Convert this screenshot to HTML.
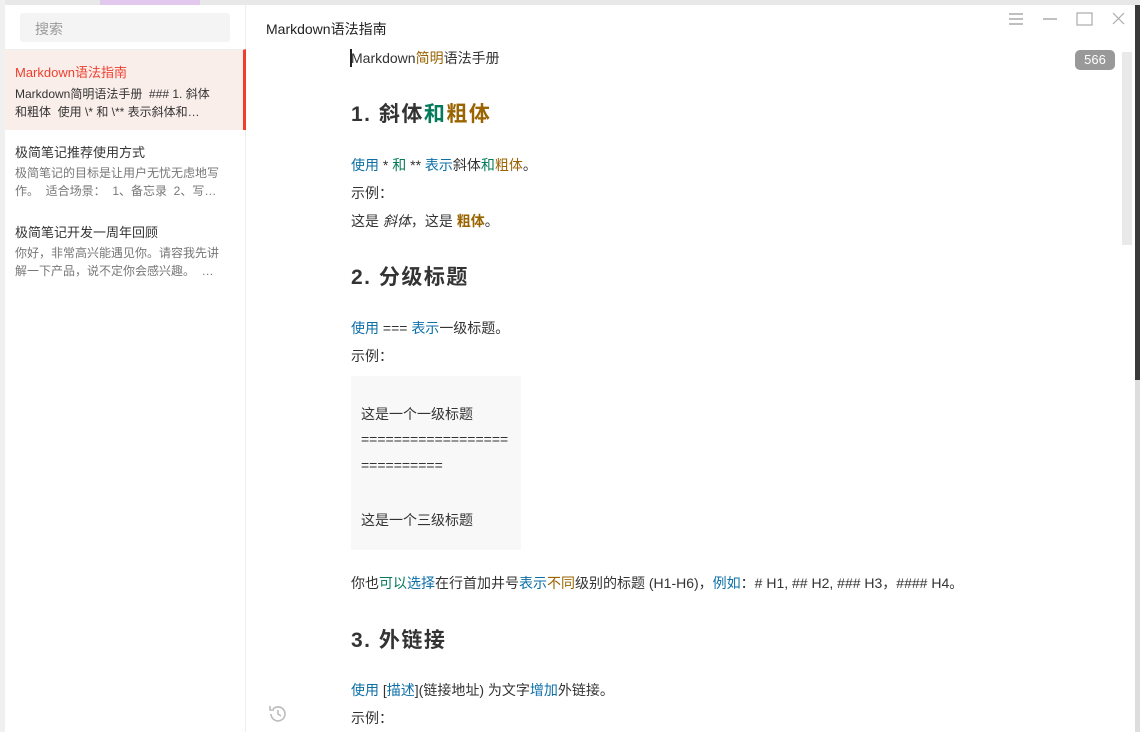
<!DOCTYPE html>
<html><head><meta charset="utf-8"><style>
*{margin:0;padding:0;box-sizing:border-box}
body{width:1140px;height:732px;overflow:hidden;background:#3a3a3a;position:relative;font-family:"Liberation Sans","Noto Sans CJK SC",sans-serif;color:#333}
.a{position:absolute;white-space:nowrap}
.win{position:absolute;left:5px;top:5px;width:1130px;height:727px;background:#fff}
.side{position:absolute;left:0;top:0;width:241px;height:727px;border-right:1px solid #eee;background:#fff}
.b{color:#0b6fa8}.g{color:#047a5a}.o{color:#9a6400}
.p{font-size:14px;color:#333}
.h{font-size:21px;font-weight:bold;color:#333;letter-spacing:1.5px}
.t{font-size:13px;color:#333}
.s{font-size:12px;color:#777;line-height:18px}
</style></head><body>
<div class="a" style="left:0;top:0;width:1140px;height:5px;background:#e8e8e8"></div>
<div class="a" style="left:100px;top:0;width:100px;height:5px;background:#e3c8ee"></div>
<div class="a" style="left:0;top:0;width:5px;height:732px;background:#f0f0f0"></div>
<div class="a" style="left:1135px;top:380px;width:5px;height:352px;background:#ddd"></div>
<div class="win">
 <div class="side">
  <div class="a" style="left:15px;top:8px;width:210px;height:29px;background:#f4f4f4;border-radius:3px;font-size:14px;color:#999;padding:6px 0 0 15px">搜索</div>
  <div class="a" style="left:0;top:44px;width:241px;height:81px;background:#faeeea;border-right:3px solid #ef3e2e;border-top:1px solid #eee"></div>
  <div class="a t" style="left:10px;top:57px;color:#ef3e2e">Markdown语法指南</div>
  <div class="a s" style="left:10px;top:80px;color:#333">Markdown简明语法手册 &nbsp;### 1. 斜体<br>和粗体 &nbsp;使用 \* 和 \** 表示斜体和…</div>
  <div class="a t" style="left:10px;top:137px">极简笔记推荐使用方式</div>
  <div class="a s" style="left:10px;top:159px">极简笔记的目标是让用户无忧无虑地写<br>作。 &nbsp;适合场景： &nbsp;1、备忘录 &nbsp;2、写…</div>
  <div class="a t" style="left:10px;top:217px">极简笔记开发一周年回顾</div>
  <div class="a s" style="left:10px;top:239px">你好，非常高兴能遇见你。请容我先讲<br>解一下产品，说不定你会感兴趣。 &nbsp;…</div>
 </div>
 <div class="a" style="left:261px;top:14px;font-size:14px;color:#222">Markdown语法指南</div>
 <svg class="a" style="left:1000px;top:6px" width="125" height="16" viewBox="0 0 125 16" fill="none" stroke="#aaa" stroke-width="1.5">
  <path d="M4 3h14M4 8h14M4 13h14"/><path d="M38 8h14"/><rect x="72" y="2" width="15" height="12" stroke-width="1.2"/><path d="M108 2l11 11M119 2l-11 11" stroke-width="1.2"/>
 </svg>
 <div class="a" style="left:1070px;top:45px;width:40px;height:20px;background:#999;border-radius:5px;color:#fff;font-size:13px;text-align:center;line-height:20px">566</div>
 <div class="a" style="left:1117px;top:47px;width:10px;height:193px;background:#e9e9ea"></div>
 <div class="a" style="left:345px;top:44px;width:2px;height:18px;background:#222"></div>
 <div class="a p" style="left:346px;top:43px">Markdown<span class="o">简明</span>语法手册</div>
 <div class="a h" style="left:346px;top:93px">1. 斜体<span class="g">和</span><span class="o">粗体</span></div>
 <div class="a p" style="left:346px;top:150px"><span class="b">使用</span> * <span class="g">和</span> ** <span class="b">表示</span>斜体<span class="g">和</span><span class="o">粗体</span>。</div>
 <div class="a p" style="left:346px;top:178px">示例：</div>
 <div class="a p" style="left:346px;top:206px">这是 <i>斜体</i>，这是 <b class="o">粗体</b>。</div>
 <div class="a h" style="left:346px;top:256px">2. 分级标题</div>
 <div class="a p" style="left:346px;top:313px"><span class="b">使用</span> === <span class="b">表示</span>一级标题。</div>
 <div class="a p" style="left:346px;top:341px">示例：</div>
 <div class="a" style="left:346px;top:371px;width:170px;height:174px;background:#f8f8f8"></div>
 <div class="a p" style="left:356px;top:399px">这是一个一级标题</div>
 <div class="a p" style="left:356px;top:426px">==================</div>
 <div class="a p" style="left:356px;top:452px">==========</div>
 <div class="a p" style="left:356px;top:505px">这是一个三级标题</div>
 <div class="a p" style="left:346px;top:568px">你也<span class="g">可以</span><span class="b">选择</span>在行首加井号<span class="b">表示</span><span class="o">不同</span>级别的标题 (H1-H6)，<span class="b">例如</span>：# H1, ## H2, ### H3，#### H4。</div>
 <div class="a h" style="left:346px;top:619px">3. 外链接</div>
 <div class="a p" style="left:346px;top:675px"><span class="b">使用</span> [<span class="b">描述</span>](链接地址) 为文字<span class="b">增加</span>外链接。</div>
 <div class="a p" style="left:346px;top:703px">示例：</div>
 <svg class="a" style="left:262px;top:698px" width="22" height="22" viewBox="0 0 22 22" fill="none" stroke="#bbb" stroke-width="1.6">
  <path d="M4 11a7 7 0 1 0 2-5"/><path d="M3 3v4h4"/><path d="M11 7v4l3 2"/>
 </svg>
</div>
</body></html>
